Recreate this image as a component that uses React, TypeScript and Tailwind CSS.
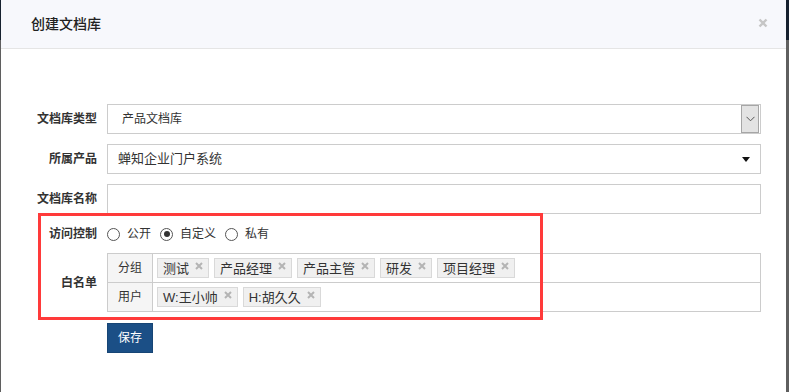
import React from "react";

const groups = ["测试", "产品经理", "产品主管", "研发", "项目经理"];
const users = ["W:王小帅", "H:胡久久"];

const Tag = ({ text }: { text: string }) => (
  <span className="flex h-[20px] items-center border border-[#d9d9d9] bg-[#f0f0f0] pl-[5px] pr-[5px] text-[13px] leading-none text-[#333]">
    {text}
    <svg
      className="ml-[6px] -mt-[4px]"
      width="8"
      height="8"
      viewBox="0 0 8 8"
    >
      <path d="M1 1 L7 7 M7 1 L1 7" stroke="#b4b4b4" strokeWidth="2" />
    </svg>
  </span>
);

const Radio = ({ label, checked }: { label: string; checked?: boolean }) => (
  <label className="mr-[9px] flex items-center">
    <span className="flex h-[13px] w-[13px] items-center justify-center rounded-full border border-[#555] bg-white">
      {checked && <span className="h-[6px] w-[6px] rounded-full bg-[#333]" />}
    </span>
    <span className="ml-[7px] text-[12px] text-[#333]">{label}</span>
  </label>
);

const Row = ({
  label,
  children,
}: {
  label: string;
  children: React.ReactNode;
}) => (
  <div className="flex items-center">
    <div className="w-[96px] pr-0 text-right text-[12px] font-bold text-[#333]">
      {label}
    </div>
    <div className="ml-[10px] w-[654px]">{children}</div>
  </div>
);

export default function App() {
  return (
    <div className="flex h-[392px] w-[789px] bg-[#5f5f5f] font-['Liberation_Sans','Noto_Sans_CJK_SC',sans-serif]">
      <div className="flex w-[1px] flex-col">
        <div className="h-[40px] bg-[#16212f]" />
      </div>
      <div className="relative h-[392px] w-[785px] bg-white">
        <div className="flex h-[49px] items-center justify-between border-b border-[#e5e5e5] bg-[#f7f8fc] pl-[30px] pr-[18px]">
          <span className="text-[14px] font-medium text-[#222]">创建文档库</span>
          <svg width="10" height="10" viewBox="0 0 10 10" className="-mt-[2px]">
            <path d="M1.5 1.5 L8.5 8.5 M8.5 1.5 L1.5 8.5" stroke="#c6c6c6" strokeWidth="2.4" />
          </svg>
        </div>

        <div className="flex flex-col pt-[55px]">
          <Row label="文档库类型">
            <div className="flex h-[30px] items-center border border-[#ccc] bg-white">
              <span className="flex-1 pl-[14px] text-[12px] text-[#333]">产品文档库</span>
              <span className="mr-px flex h-[28px] w-[18px] items-center justify-center border border-[#a6a6a6] bg-[#e3e3e3]">
                <svg width="9" height="6" viewBox="0 0 9 6">
                  <path d="M0.5 0.8 L4.5 4.8 L8.5 0.8" stroke="#555" strokeWidth="1" fill="none" />
                </svg>
              </span>
            </div>
          </Row>
          <div className="h-[10px]" />
          <Row label="所属产品">
            <div className="flex h-[30px] items-center border border-[#ccc] bg-white pr-[10px]">
              <span className="flex-1 pl-[10px] text-[13px] text-[#333]">蝉知企业门户系统</span>
              <svg width="8" height="5" viewBox="0 0 8 5">
                <path d="M0 0 L8 0 L4 5 Z" fill="#111" />
              </svg>
            </div>
          </Row>
          <div className="h-[10px]" />
          <Row label="文档库名称">
            <div className="h-[30px] border border-[#ccc] bg-white" />
          </Row>
          <div className="h-[10px]" />
          <Row label="访问控制">
            <div className="flex h-[20px] items-center">
              <Radio label="公开" />
              <Radio label="自定义" checked />
              <Radio label="私有" />
            </div>
          </Row>
          <div className="h-[9px]" />
          <Row label="白名单">
            <div className="border border-[#ccc]">
              <div className="flex h-[29px] border-b border-[#ccc]">
                <div className="flex w-[45px] items-center justify-center border-r border-[#ccc] bg-[#f5f5f5] text-[12px] text-[#333]">
                  分组
                </div>
                <div className="flex items-center gap-[5px] pl-[4px]">
                  {groups.map((g) => (
                    <Tag key={g} text={g} />
                  ))}
                </div>
              </div>
              <div className="flex h-[28px]">
                <div className="flex w-[45px] items-center justify-center border-r border-[#ccc] bg-[#f5f5f5] text-[12px] text-[#333]">
                  用户
                </div>
                <div className="flex items-center gap-[5px] pl-[4px]">
                  {users.map((u) => (
                    <Tag key={u} text={u} />
                  ))}
                </div>
              </div>
            </div>
          </Row>
          <div className="h-[11px]" />
          <div className="ml-[106px]">
            <button className="h-[30px] w-[46px] border border-[#174575] bg-[#1b4f86] text-[12px] text-white">
              保存
            </button>
          </div>
        </div>

        <div className="pointer-events-none absolute left-[37px] top-[213px] h-[107px] w-[505px] border-[3px] border-[#ff3a3a]" />
      </div>
      <div className="flex w-[3px] flex-col">
        <div className="h-[40px] bg-[#16212f]" />
      </div>
    </div>
  );
}
